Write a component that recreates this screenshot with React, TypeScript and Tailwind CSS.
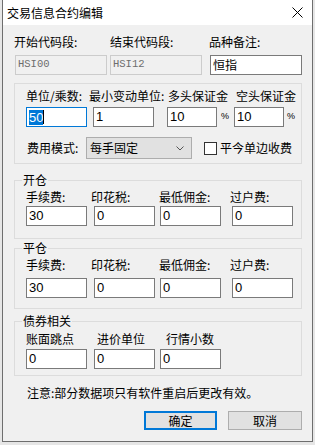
import React from "react";

const cjk = { fontFamily: '"Noto Sans CJK SC", "Noto Sans", sans-serif' };
const num = { fontFamily: '"Liberation Sans", Arial, sans-serif' };

function Input({ w, value, className = "" }: { w: string; value: string; className?: string }) {
  return (
    <div
      className={`${w} h-[20px] bg-white border border-[#7a7a7a] flex items-center pl-[2px] text-[13px] text-black ${className}`}
      style={num}
    >
      {value}
    </div>
  );
}

function Group({ title, h, children, className = "" }: { title?: string; h: string; children: React.ReactNode; className?: string }) {
  return (
    <div className={`relative w-[288px] ${h} border border-[#dcdcdc] ${className}`}>
      {title && (
        <span className="absolute -top-[9px] left-[7px] bg-[#f0f0f0] px-[1px] text-[12px] leading-[16px] text-black" style={cjk}>
          {title}
        </span>
      )}
      {children}
    </div>
  );
}

function FeeGroup({ title, h, className, labelPt, inputMt }: { title: string; h: string; className: string; labelPt: string; inputMt: string }) {
  return (
    <Group title={title} h={h} className={className}>
      <div className={`flex ${labelPt} pl-[11px] text-[12px] leading-[14px] text-black`} style={cjk}>
        <span className="w-[65px]">手续费:</span>
        <span className="w-[68px]">印花税:</span>
        <span className="w-[71px]">最低佣金:</span>
        <span>过户费:</span>
      </div>
      <div className={`flex ${inputMt} pl-[11px]`}>
        <Input w="w-[61px]" value="30" />
        <Input w="w-[61px]" value="0" className="ml-[7px]" />
        <Input w="w-[61px]" value="0" className="ml-[5px]" />
        <Input w="w-[61px]" value="0" className="ml-[11px]" />
      </div>
    </Group>
  );
}

export default function App() {
  return (
    <div className="w-[315px] h-[445px] bg-[#e6e6e6] overflow-hidden flex" style={cjk}>
      <div className="ml-[2px] w-[311px] h-[442px] border-x border-b border-[#6e6e6e] bg-[#f0f0f0] flex flex-col">
        {/* title bar */}
        <div className="h-[25px] bg-white flex items-center justify-between pl-[4px] pr-[9px]">
          <span className="text-[12px] text-black leading-[14px]">交易信息合约编辑</span>
          <svg width="11" height="11" viewBox="0 0 11 11">
            <path d="M0.5 0.5 L10.5 10.5 M10.5 0.5 L0.5 10.5" stroke="#000" strokeWidth="1" />
          </svg>
        </div>

        {/* body */}
        <div className="pl-[11px] pt-[10px] flex flex-col">
          <div className="flex h-[14px] text-[12px] leading-[14px] text-black">
            <span className="w-[96px]">开始代码段:</span>
            <span className="w-[99px]">结束代码段:</span>
            <span>品种备注:</span>
          </div>
          <div className="flex mt-[6px]">
            <div
              className="ml-[1px] w-[92px] h-[20px] bg-[#f0f0f0] border border-[#cccccc] flex items-center pl-[2px] text-[10.5px] text-[#6d6d6d]"
              style={{ fontFamily: '"Liberation Mono", monospace' }}
            >
              HSI00
            </div>
            <div
              className="ml-[3px] w-[92px] h-[20px] bg-[#f0f0f0] border border-[#cccccc] flex items-center pl-[2px] text-[10.5px] text-[#6d6d6d]"
              style={{ fontFamily: '"Liberation Mono", monospace' }}
            >
              HSI12
            </div>
            <div className="ml-[8px] w-[92px] h-[20px] bg-white border border-[#7a7a7a] flex items-center pl-[2px] text-[12px] text-black">
              恒指
            </div>
          </div>

          {/* group 1 */}
          <Group h="h-[81px]" className="mt-[8px]">
            <div className="flex pt-[5px] pl-[11px] text-[12px] leading-[14px] text-black">
              <span className="w-[63px]">单位/乘数:</span>
              <span className="w-[79px]">最小变动单位:</span>
              <span className="w-[68px]">多头保证金</span>
              <span>空头保证金</span>
            </div>
            <div className="flex items-center mt-[4px] pl-[11px]">
              <div className="w-[61px] h-[20px] bg-white border border-[#0078d7] flex items-center pl-[2px] text-[13px]" style={num}>
                <span className="bg-[#0078d7] text-white leading-[15px]">50</span>
                <span className="w-[1px] h-[14px] bg-black" />
              </div>
              <Input w="w-[61px]" value="1" className="ml-[6px]" />
              <Input w="w-[50px]" value="10" className="ml-[13px]" />
              <span className="ml-[4px] w-[13px] text-[9px] text-black" style={num}>%</span>
              <Input w="w-[50px]" value="10" />
              <span className="ml-[3px] text-[9px] text-black" style={num}>%</span>
            </div>
            <div className="flex items-center mt-[10px] pl-[12px] h-[22px]">
              <span className="w-[59px] text-[12px] leading-[14px] text-black">费用模式:</span>
              <div className="w-[106px] h-[22px] bg-[#e1e1e1] border border-[#adadad] flex items-center justify-between pl-[3px] pr-[7px]">
                <span className="text-[12px] leading-[14px] text-black">每手固定</span>
                <svg width="8" height="5" viewBox="0 0 8 5">
                  <path d="M0.5 0.5 L4 4 L7.5 0.5" stroke="#555" strokeWidth="1" fill="none" />
                </svg>
              </div>
              <div className="ml-[12px] w-[13px] h-[13px] bg-white border border-[#333333]" />
              <span className="ml-[3px] text-[12px] leading-[14px] text-black">平今单边收费</span>
            </div>
          </Group>

          <FeeGroup title="开仓" h="h-[59px]" className="mt-[16px]" labelPt="pt-[9px]" inputMt="mt-[2px]" />
          <FeeGroup title="平仓" h="h-[61px]" className="mt-[9px]" labelPt="pt-[9px]" inputMt="mt-[6px]" />

          <Group title="债券相关" h="h-[55px]" className="mt-[12px]">
            <div className="flex pt-[10px] pl-[11px] text-[12px] leading-[14px] text-black">
              <span className="w-[71px]">账面跳点</span>
              <span className="w-[69px]">进价单位</span>
              <span>行情小数</span>
            </div>
            <div className="flex mt-[3px] pl-[11px]">
              <Input w="w-[61px]" value="0" />
              <Input w="w-[61px]" value="0" className="ml-[7px]" />
              <Input w="w-[61px]" value="0" className="ml-[5px]" />
            </div>
          </Group>

          <div className="mt-[10px] ml-[13px] text-[12px] leading-[14px] text-black">
            注意:部分数据项只有软件重启后更改有效。
          </div>

          <div className="flex mt-[11px] ml-[130px]">
            <div className="w-[73px] h-[19px] bg-[#e1e1e1] border-2 border-[#0078d7] flex items-center justify-center text-[12px] text-black">
              确定
            </div>
            <div className="ml-[11px] w-[74px] h-[19px] bg-[#e1e1e1] border border-[#adadad] flex items-center justify-center text-[12px] text-black">
              取消
            </div>
          </div>
        </div>
      </div>
    </div>
  );
}
